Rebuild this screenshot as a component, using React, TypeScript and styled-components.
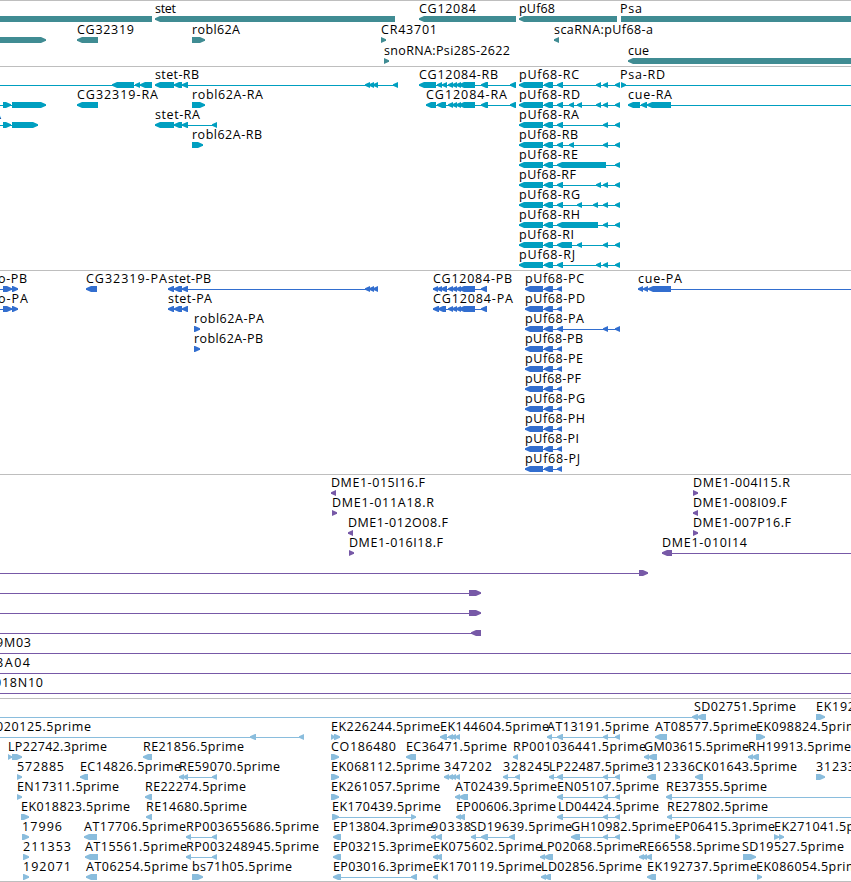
import styled, { createGlobalStyle } from 'styled-components'

type Exon = [number, number]
type Dir = 'l' | 'r'

interface Feature {
  label?: string
  x: number
  end: number
  dir: Dir
  exons: Exon[]
  line?: Exon
}

interface TrackData {
  name: string
  color: string
  rowHeight: number
  gap: number
  rows: Feature[][]
}

const WIDTH = 851

// one feature: label with its start / end, the strand and its exons
function f(label: string, x: number, end: number, dir: Dir, exons: Exon[], line?: Exon): Feature {
  return { label, x, end, dir, exons, line }
}

// feature without a label
function bare(dir: Dir, exons: Exon[], line?: Exon): Feature {
  return { x: 0, end: 0, dir, exons, line }
}

const genes: Feature[][] = [
  [
    bare('r', [], [-40, 152]),
    f('stet', 155, 176, 'l', [[155, 395]]),
    f('CG12084', 419, 476, 'l', [[419, 516]]),
    f('pUf68', 519, 555, 'l', [[519, 617]]),
    f('Psa', 620, 642, 'r', [[621, 900]]),
  ],
  [
    bare('r', [[-20, 46]]),
    f('CG32319', 77, 134, 'l', [[77, 98]]),
    f('robl62A', 192, 240, 'r', [[192, 205]]),
    f('CR43701', 381, 437, 'r', [[381, 386]]),
    f('scaRNA:pUf68-a', 554, 653, 'l', [[554, 559]]),
  ],
  [
    f('snoRNA:Psi28S-2622', 384, 510, 'r', [[384, 389]]),
    f('cue', 628, 649, 'l', [[628, 900]]),
  ],
]

const stet: Exon[] = [[155, 174], [174, 182], [182, 188]]
const cgMid: Exon[] = [[448, 453], [452, 457], [456, 461], [459, 475]]
const cgEnd: Exon[] = [[481, 488], [510, 516]]
const puf: Exon[] = [[519, 543], [544, 553]]
const e557: Exon = [557, 563]
const e569: Exon = [569, 574]
const e577: Exon = [577, 582]
const e593: Exon = [593, 598]
const e596: Exon = [596, 601]
const e603: Exon = [603, 608]
const e615: Exon = [615, 620]

const transcripts: Feature[][] = [
  [
    bare('l', [[112, 134], [135, 140], [140, 152]], [0, 152]),
    f('stet-RB', 155, 199, 'l', [...stet, [365, 370], [369, 374], [373, 378], [393, 398]]),
    f('CG12084-RB', 419, 498, 'l', [[419, 436], [437, 442], [442, 447], ...cgMid, ...cgEnd]),
    f('pUf68-RC', 519, 579, 'l', [...puf, e557, e596, e603, e615]),
    f('Psa-RD', 620, 665, 'r', [[621, 626]], [621, WIDTH]),
  ],
  [
    bare('r', [[3, 11], [12, 46]], [0, 46]),
    f('CG32319-RA', 77, 158, 'l', [[77, 98]]),
    f('robl62A-RA', 192, 263, 'r', [[192, 205]]),
    f('CG12084-RA', 426, 507, 'l', [[426, 436], [437, 446], ...cgMid, ...cgEnd]),
    f('pUf68-RD', 519, 580, 'l', [...puf, e557, e569, e577, e596, e603, e615]),
    f('cue-RA', 628, 672, 'l', [[628, 640], [641, 647], [647, 671]], [628, WIDTH]),
  ],
  [
    f('-RA', -21, 1, 'r', [[3, 11], [12, 38]], [0, 38]),
    f('stet-RA', 155, 200, 'l', [...stet, [212, 217]]),
    f('pUf68-RA', 519, 579, 'l', [...puf, e557, e603, e615]),
  ],
  [
    f('robl62A-RB', 192, 262, 'r', [[192, 203]]),
    f('pUf68-RB', 519, 578, 'l', [...puf, e557, e569, e603, e615]),
  ],
  [f('pUf68-RE', 519, 578, 'l', [...puf, [557, 606], e615])],
  [f('pUf68-RF', 519, 576, 'l', [...puf, e557, e596, e603, e615])],
  [f('pUf68-RG', 519, 580, 'l', [...puf, e557, e577, e593, e603, e615])],
  [f('pUf68-RH', 519, 580, 'l', [...puf, [557, 598], e603, e615])],
  [f('pUf68-RI', 519, 574, 'l', [...puf, [557, 572], e577, e603, e615])],
  [f('pUf68-RJ', 519, 575, 'l', [...puf, e557, e596, e603, e615])],
]

const stetP: Exon[] = [[168, 174], [174, 182], [182, 188]]
const pufP: Exon[] = [[525, 543], [544, 553], [557, 562]]

const proteins: Feature[][] = [
  [
    f('o-PB', -2, 27, 'r', [[3, 12], [12, 18]], [0, 18]),
    f('CG32319-PA', 86, 167, 'l', [[86, 97]]),
    f('stet-PB', 168, 211, 'l', [...stetP, [365, 370], [369, 374], [373, 378]]),
    f('CG12084-PB', 433, 512, 'l', [[433, 438], [437, 442], [441, 447], ...cgMid, [481, 487]]),
    f('pUf68-PC', 525, 584, 'l', pufP),
    f('cue-PA', 638, 682, 'l', [[638, 643], [643, 648], [648, 671]], [638, WIDTH]),
  ],
  [
    f('o-PA', -2, 28, 'r', [[3, 12], [12, 18]], [0, 18]),
    f('stet-PA', 168, 212, 'l', stetP),
    f('CG12084-PA', 433, 513, 'l', [[433, 439], [438, 446], ...cgMid, [481, 487]]),
    f('pUf68-PD', 525, 585, 'l', pufP),
  ],
  [
    f('robl62A-PA', 194, 264, 'r', [[194, 200]]),
    f('pUf68-PA', 525, 584, 'l', [[525, 543], [544, 553], e557, e603, e615]),
  ],
  [
    f('robl62A-PB', 194, 263, 'r', [[194, 200]]),
    f('pUf68-PB', 525, 583, 'l', pufP),
  ],
  [f('pUf68-PE', 525, 583, 'l', pufP)],
  [f('pUf68-PF', 525, 581, 'l', pufP)],
  [f('pUf68-PG', 525, 585, 'l', pufP)],
  [f('pUf68-PH', 525, 585, 'l', pufP)],
  [f('pUf68-PI', 525, 579, 'l', pufP)],
  [f('pUf68-PJ', 525, 580, 'l', pufP)],
]

const clones: Feature[][] = [
  [
    f('DME1-015I16.F', 331, 425, 'l', [[331, 336]]),
    f('DME1-004I15.R', 693, 790, 'r', [[693, 698]]),
  ],
  [
    f('DME1-011A18.R', 332, 434, 'r', [[332, 337]]),
    f('DME1-008I09.F', 693, 787, 'l', [[693, 698]]),
  ],
  [
    f('DME1-012O08.F', 348, 448, 'l', [[348, 353]]),
    f('DME1-007P16.F', 693, 791, 'r', [[693, 698]]),
  ],
  [
    f('DME1-016I18.F', 349, 443, 'r', [[349, 354]]),
    f('DME1-010I14', 662, 747, 'l', [[662, 672]], [662, WIDTH]),
  ],
  [bare('r', [[639, 648]], [0, 648])],
  [bare('r', [[469, 481]], [0, 481])],
  [bare('r', [[469, 481]], [0, 481])],
  [bare('l', [[471, 481]], [0, 481])],
  [f('9M03', -4, 31, 'r', [], [0, WIDTH])],
  [f('8A04', -4, 30, 'r', [], [0, WIDTH])],
  [f('018N10', -6, 43, 'r', [], [0, WIDTH])],
]

const ests: Feature[][] = [
  [
    f('SD02751.5prime', 694, 796, 'l', [[692, 698], [697, 706]], [0, 706]),
    f('EK192', 816, 855, 'r', [[816, 825]]),
  ],
  [
    f('020125.5prime', -4, 91, 'l', [[250, 256], [299, 304]], [0, 304]),
    f('EK226244.5prime', 331, 440, 'r', [[331, 335], [334, 340]]),
    f('EK144604.5prime', 440, 549, 'l', [[440, 447], [448, 453], [451, 456], [455, 460]]),
    f('AT13191.5prime', 547, 649, 'l', [[547, 552], e557, e603, e615]),
    f('AT08577.5prime', 655, 757, 'l', [[655, 667]]),
    f('EK098824.5prime', 756, 865, 'r', [[756, 765]]),
  ],
  [
    f('LP22742.3prime', 8, 107, 'r', [[8, 12], [12, 22]]),
    f('RE21856.5prime', 143, 244, 'l', [[143, 152]]),
    f('CO186480', 331, 396, 'r', [[331, 339]]),
    f('EC36471.5prime', 406, 507, 'l', [[406, 416]]),
    f('RP001036441.5prime', 513, 646, 'l', [[513, 518]]),
    f('GM03615.5prime', 644, 749, 'l', [[644, 649], [648, 657]]),
    f('RH19913.5prime', 748, 851, 'l', [[748, 753], [752, 759]]),
  ],
  [
    f('572885', 17, 64, 'r', [[17, 22]]),
    f('EC14826.5prime', 80, 181, 'l', [[80, 88]]),
    f('RE59070.5prime', 179, 280, 'l', [[179, 184], [183, 188], [212, 217]]),
    f('EK068112.5prime', 331, 440, 'r', [[331, 339]]),
    f('347202', 444, 492, 'l', [[444, 449], [448, 453], [451, 456], [455, 460]]),
    f('328245', 503, 550, 'l', [[503, 508], [515, 520]]),
    f('LP22487.5prime', 549, 648, 'l', [[549, 554], e557, e603, e615]),
    f('312336', 647, 695, 'l', [[647, 656]]),
    f('CK01643.5prime', 695, 797, 'l', [[695, 703]]),
    f('31233', 816, 855, 'r', [[816, 825]]),
  ],
  [
    f('EN17311.5prime', 17, 119, 'r', [[17, 22]]),
    f('RE22274.5prime', 145, 246, 'l', [[145, 152]]),
    f('EK261057.5prime', 331, 440, 'r', [[331, 339]]),
    f('AT02439.5prime', 455, 557, 'l', [[455, 460], [459, 468]]),
    f('EN05107.5prime', 557, 659, 'l', [e557, e603, e615]),
    f('RE37355.5prime', 666, 767, 'l', [[666, 672]], [666, WIDTH]),
  ],
  [
    f('EK018823.5prime', 21, 130, 'r', [[21, 29]]),
    f('RE14680.5prime', 146, 247, 'l', [[146, 152]]),
    f('EK170439.5prime', 332, 441, 'r', [[332, 339], [411, 416]]),
    f('EP00606.3prime', 456, 556, 'l', [[456, 461], [459, 465]]),
    f('LD04424.5prime', 558, 659, 'l', [e557, e603, e615]),
    f('RE27802.5prime', 667, 768, 'l', [[667, 672]], [667, WIDTH]),
  ],
  [
    f('17996', 22, 62, 'r', [[22, 29]]),
    f('AT17706.5prime', 84, 186, 'l', [[84, 97]]),
    f('RP003655686.5prime', 186, 319, 'l', [[186, 191], [212, 217]]),
    f('EP13804.3prime', 333, 433, 'l', [[333, 341]]),
    f('90338', 431, 471, 'l', [[431, 436], [436, 442]]),
    f('SD19639.5prime', 470, 572, 'l', [[471, 476], [481, 488], [509, 515]]),
    f('GH10982.5prime', 571, 675, 'l', [[571, 580], e603, e615]),
    f('EP06415.3prime', 675, 775, 'r', [[675, 680]]),
    f('EK271041.5prime', 774, 883, 'r', [[774, 779], [779, 784]]),
  ],
  [
    f('211353', 23, 71, 'r', [[23, 29]]),
    f('AT15561.5prime', 85, 187, 'l', [[85, 98]]),
    f('RP003248945.5prime', 186, 319, 'l', [[186, 191], [212, 217]]),
    f('EP03215.3prime', 333, 433, 'l', [[333, 341]]),
    f('EK075602.5prime', 433, 542, 'l', [[433, 438], [436, 442]]),
    f('LP02068.5prime', 540, 640, 'l', [[540, 545], [544, 553]]),
    f('RE66558.5prime', 639, 740, 'l', [[639, 644], [642, 647], [646, 652]]),
    f('SD19527.5prime', 742, 844, 'r', [[743, 756]]),
  ],
  [
    f('192071', 23, 71, 'r', [[23, 29]]),
    f('AT06254.5prime', 86, 188, 'l', [[86, 97]]),
    f('bs71h05.5prime', 192, 292, 'r', [[192, 203]]),
    f('EP03016.3prime', 333, 433, 'l', [[333, 341], [411, 417]]),
    f('EK170119.5prime', 433, 542, 'l', [[433, 438]]),
    f('LD02856.5prime', 541, 642, 'l', [[541, 546], [544, 551]]),
    f('EK192737.5prime', 647, 757, 'l', [[647, 656]]),
    f('EK086054.5prime', 756, 865, 'r', [[757, 762]]),
  ],
]

const tracks: TrackData[] = [
  { name: 'genes', color: '#408c93', rowHeight: 21, gap: 2, rows: genes },
  { name: 'transcripts', color: '#009fc0', rowHeight: 20, gap: 3, rows: transcripts },
  { name: 'proteins', color: '#326ecf', rowHeight: 20, gap: 3, rows: proteins },
  { name: 'clones', color: '#7759a7', rowHeight: 20, gap: 3, rows: clones },
  { name: 'ests', color: '#8abddd', rowHeight: 20, gap: 2, rows: ests },
]

// blunt arrow, 6px high, pointing along the strand
function exonPath([a, b]: Exon, dir: Dir) {
  const t = Math.min(b - a, 5)
  if (dir === 'l') return `M${a} 17.3L${a + t} 15H${b}V21H${a + t}L${a} 18.7Z`
  return `M${b} 17.3L${b - t} 15H${a}V21H${b - t}L${b} 18.7Z`
}

function FeatureGlyph({ feature, color }: { feature: Feature; color: string }) {
  const { label, x, end, dir, exons } = feature
  const [from, to] = feature.line || [exons[0][0], exons[exons.length - 1][1]]
  // a gene that starts off screen is one flat bar
  const bar = !label && exons.length === 0
  return (
    <g>
      <rect x={from} y={bar ? 15 : 18} width={to - from} height={bar ? 6 : 1} fill={color} />
      {exons.map((exon, i) => (
        <path key={i} d={exonPath(exon, dir)} fill={color} />
      ))}
      {label && (
        <Label x={x} y={12} textLength={end - x}>
          {label}
        </Label>
      )}
    </g>
  )
}

function App() {
  return (
    <>
      <GlobalStyle />
      <Browser>
        {tracks.map((track) => (
          <Track key={track.name} $gap={track.gap}>
            {track.rows.map((row, i) => (
              <Row key={i} $height={track.rowHeight}>
                {row.map((feature, j) => (
                  <FeatureGlyph key={j} feature={feature} color={track.color} />
                ))}
              </Row>
            ))}
          </Track>
        ))}
      </Browser>
    </>
  )
}

export default App

const GlobalStyle = createGlobalStyle`
  body {
    margin: 0;
    background-color: white;
  }
`

const Browser = styled.div`
  display: flex;
  flex-direction: column;
  width: ${WIDTH}px;
  height: 881px;
  border-bottom: 1px solid #bebebe;
  overflow: hidden;
`

const Track = styled.section<{ $gap: number }>`
  display: flex;
  flex-direction: column;
  border-top: 1px solid #bebebe;
  padding-bottom: ${(p) => p.$gap}px;
`

const Row = styled.svg<{ $height: number }>`
  display: block;
  flex: none;
  width: 100%;
  height: ${(p) => p.$height}px;
  overflow: visible;
`

const Label = styled.text`
  font-family: 'Open Sans', 'DejaVu Sans', sans-serif;
  font-size: 12.5px;
  fill: black;
`
